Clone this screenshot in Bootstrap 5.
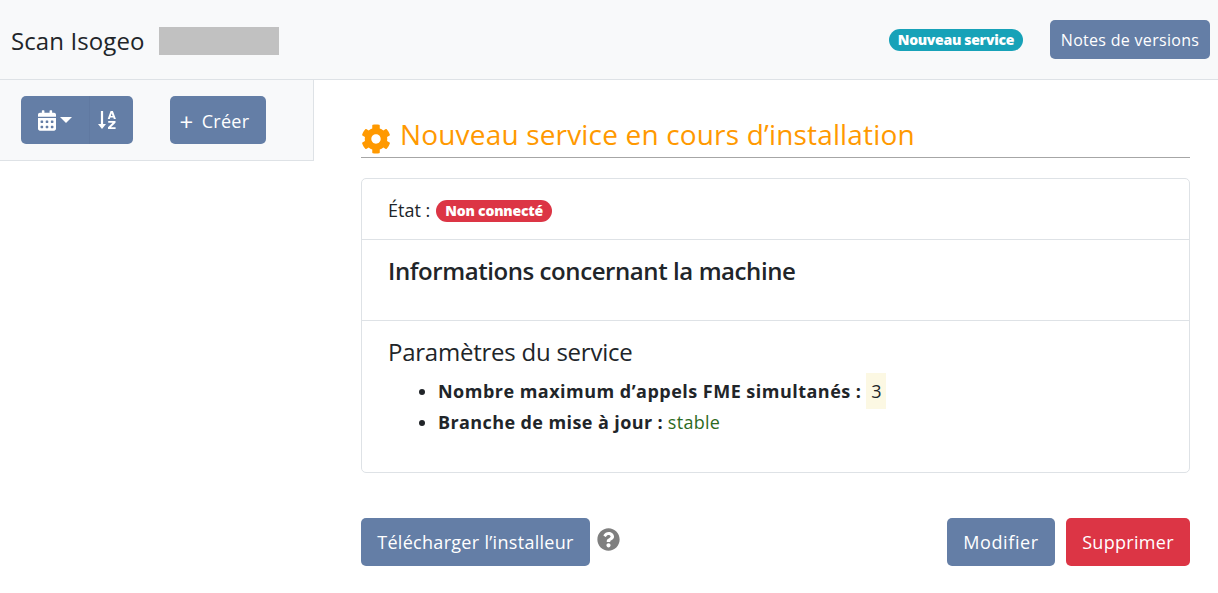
<!DOCTYPE html>
<html lang="fr">
<head>
    <meta charset="UTF-8">
    <meta name="viewport" content="width=device-width, initial-scale=1.0">
    <title>Scan Isogeo</title>
    <link href="https://cdn.jsdelivr.net/npm/bootstrap@5.3.3/dist/css/bootstrap.min.css" rel="stylesheet">
    <style>
        body {
            font-family: "Open Sans", "Noto Sans", sans-serif;
            color: #212529;
        }
        .top-bar {
            height: 80px;
            background-color: #f8f9fa;
            border-bottom: 1px solid #dee2e6;
            padding: 0 8px 0 11px;
        }
        .brand-name { font-size: 24px; margin-top: 2px; letter-spacing: 0.1px; }
        .hidden-block {
            width: 120px;
            height: 28px;
            background-color: #c1c1c1;
            margin: 2px 0 0 14px;
        }
        .btn-iso {
            background-color: #647ea6;
            color: #fff;
            border: 0;
            font-size: 18px;
            border-radius: 5px;
        }
        .btn-iso:hover { background-color: #566f96; color: #fff; }
        .btn-notes { width: 160px; height: 39px; padding: 0; margin-left: 27px; font-size: 16px; letter-spacing: 0.3px; }
        .badge-new {
            background-color: #17a2b8;
            font-size: 14px;
            font-weight: 800;
            padding: 4px 9px;
            letter-spacing: -0.3px;
            border-radius: 11px;
        }
        .side-panel { width: 314px; flex: none; }
        .side-tools {
            height: 81px;
            padding: 16px 0 0 21px;
            background-color: #f8f9fa;
            border-right: 1px solid #dee2e6;
            border-bottom: 1px solid #dee2e6;
        }
        .btn-tool { height: 48px; width: 69px; padding: 0 2px 0 0; }
        .btn-tool-right { width: 44px; padding: 0 0 0 7px; border-left: 1px solid #6079a1; }
        .btn-create { width: 96px; height: 48px; padding: 2px 7px 0 0; margin-left: 37px; letter-spacing: 0.3px; }
        .btn-create .plus-sign { font-size: 24px; line-height: 1; margin-right: 8px; vertical-align: -3px; }
        .content-pane { padding: 0 28px 0 47px; }
        .page-title {
            color: #ff9900;
            font-size: 28px;
            font-weight: 400;
            height: 78px;
            margin: 0;
            padding-top: 34px;
            border-bottom: 1px solid #a6a6a6;
            line-height: 40px;
            letter-spacing: 0.17px;
        }
        .page-title svg { margin-right: 9px; vertical-align: -9px; }
        .info-card { margin-top: 20px; border-color: #dee2e6; height: 295px; border-radius: 5px; }
        .state-row { height: 61px; padding: 3px 26px 0; font-size: 18px; border-bottom: 1px solid #dee2e6; }
        .badge-off {
            background-color: #dc3545;
            font-size: 14px;
            font-weight: 800;
            padding: 4px 9px;
            letter-spacing: -0.2px;
            border-radius: 11px;
            margin-left: 6px;
        }
        .machine-row { height: 81px; padding: 16px 26px 0; border-bottom: 1px solid #dee2e6; }
        .machine-row h5, .params-row h5 { font-size: 24px; margin: 0; line-height: 30px; }
        .machine-row h5 { font-weight: 600; letter-spacing: -0.42px; }
        .params-row h5 { font-weight: 400; letter-spacing: -0.24px; }
        .params-row { padding: 16px 26px 0; font-size: 18px; }
        .params-row ul { margin: 9px 0 0; padding-left: 50px; line-height: 31px; }
        .params-row b { font-weight: 700; letter-spacing: 0.48px; }
        .branch-label { letter-spacing: 0.4px !important; }
        .value-max { background-color: #fcf8e3; padding: 6px 5px; }
        .value-branch { color: #2d6a1e; letter-spacing: 0.3px; }
        .action-row { margin-top: 45px; }
        .action-btn { height: 48px; font-size: 18px; padding: 0; letter-spacing: 0.3px; }
        .btn-download { width: 229px; }
        .btn-edit { width: 108px; letter-spacing: 0.6px; }
        .help-icon { margin-left: 7px; margin-bottom: 6px; }
        .btn-delete { background-color: #dc3545; margin-left: 11px; width: 124px; }
        .btn-delete:hover { background-color: #c82333; }
    </style>
</head>
<body>

    <nav class="top-bar d-flex align-items-center">
        <span class="brand-name">Scan Isogeo</span>
        <span class="hidden-block"></span>
        <span class="badge rounded-pill badge-new ms-auto">Nouveau service</span>
        <button type="button" class="btn btn-iso btn-notes">Notes de versions</button>
    </nav>

    <div class="d-flex">
        <aside class="side-panel">
            <div class="side-tools d-flex align-items-start">
                <div class="btn-group">
                    <button type="button" class="btn btn-iso btn-tool d-flex align-items-center justify-content-center gap-1">
                        <svg width="18" height="21" viewBox="0 0 448 512" fill="#fff"><path d="M0 464c0 26.500 21.500 48 48 48h352c26.500 0 48-21.500 48-48V192H0v272zm320-196c0-6.600 5.400-12 12-12h40c6.600 0 12 5.400 12 12v40c0 6.600-5.400 12-12 12h-40c-6.600 0-12-5.400-12-12v-40zm0 128c0-6.600 5.400-12 12-12h40c6.600 0 12 5.400 12 12v40c0 6.600-5.400 12-12 12h-40c-6.600 0-12-5.400-12-12v-40zM192 268c0-6.600 5.400-12 12-12h40c6.600 0 12 5.400 12 12v40c0 6.600-5.400 12-12 12h-40c-6.600 0-12-5.400-12-12v-40zm0 128c0-6.600 5.400-12 12-12h40c6.600 0 12 5.400 12 12v40c0 6.600-5.400 12-12 12h-40c-6.600 0-12-5.400-12-12v-40zM64 268c0-6.600 5.400-12 12-12h40c6.600 0 12 5.400 12 12v40c0 6.600-5.400 12-12 12H76c-6.600 0-12-5.400-12-12v-40zm0 128c0-6.600 5.400-12 12-12h40c6.600 0 12 5.400 12 12v40c0 6.600-5.400 12-12 12H76c-6.600 0-12-5.400-12-12v-40zM400 64h-48V16c0-8.800-7.200-16-16-16h-32c-8.800 0-16 7.200-16 16v48H160V16c0-8.800-7.200-16-16-16h-32c-8.800 0-16 7.200-16 16v48H48C21.500 64 0 85.500 0 112v48h448v-48c0-26.500-21.500-48-48-48z"/></svg>
                        <svg width="12" height="6" viewBox="0 0 12 6" fill="#fff"><path d="M0 0h12L6 6z"/></svg>
                    </button>
                    <button type="button" class="btn btn-iso btn-tool btn-tool-right d-flex align-items-center">
                        <svg width="20" height="20" viewBox="0 0 20 20" fill="#fff">
                            <path d="M3.900 1h2.200v13h2.900L5 19 1 14h2.900z"/>
                            <path d="M13.600 1h2.300l3 8h-2.100l-.5-1.500h-3l-.5 1.500h-2.100zm1.100 2.300-.9 2.800h1.800zM11.200 11h7.300v1.700l-4.600 4.500h4.700V19h-7.600v-1.700l4.600-4.500h-4.400z"/>
                        </svg>
                    </button>
                </div>
                <button type="button" class="btn btn-iso btn-create"><span class="plus-sign">+</span>Créer</button>
            </div>
        </aside>

        <main class="content-pane flex-grow-1">
            <h1 class="page-title">
                <svg width="30" height="30" viewBox="0 0 512 512" fill="#ff9900"><path d="M487.400 315.700l-42.600-24.600c4.300-23.200 4.300-47 0-70.200l42.600-24.600c4.900-2.800 7.100-8.600 5.500-14-11.100-35.600-30-67.800-54.700-94.600-3.800-4.100-10-5.100-14.800-2.300L380.800 110c-17.900-15.400-38.500-27.300-60.800-35.100V25.800c0-5.600-3.900-10.500-9.400-11.700-36.700-8.200-74.300-7.800-109.200 0-5.500 1.200-9.400 6.100-9.400 11.700V75c-22.200 7.900-42.800 19.800-60.800 35.100L88.700 85.500c-4.900-2.800-11-1.900-14.800 2.300-24.700 26.700-43.600 58.900-54.700 94.600-1.700 5.400.6 11.200 5.500 14L67.300 221c-4.300 23.200-4.300 47 0 70.200l-42.600 24.600c-4.900 2.800-7.100 8.600-5.500 14 11.100 35.600 30 67.800 54.700 94.600 3.800 4.100 10 5.100 14.800 2.300l42.600-24.600c17.900 15.400 38.500 27.300 60.800 35.100v49.200c0 5.600 3.900 10.500 9.400 11.700 36.700 8.200 74.300 7.800 109.200 0 5.500-1.200 9.400-6.100 9.400-11.700v-49.200c22.200-7.900 42.800-19.800 60.800-35.100l42.600 24.600c4.900 2.800 11 1.900 14.800-2.300 24.700-26.700 43.600-58.900 54.700-94.600 1.500-5.500-.7-11.300-5.600-14.100zM256 336c-44.100 0-80-35.900-80-80s35.900-80 80-80 80 35.900 80 80-35.900 80-80 80z"/></svg>Nouveau service en cours d’installation
            </h1>

            <div class="card info-card">
                <div class="state-row d-flex align-items-center">
                    <span>État :</span>
                    <span class="badge rounded-pill badge-off">Non connecté</span>
                </div>
                <div class="machine-row">
                    <h5>Informations concernant la machine</h5>
                </div>
                <div class="params-row">
                    <h5>Paramètres du service</h5>
                    <ul>
                        <li><b>Nombre maximum d’appels FME simultanés :</b> <span class="value-max">3</span></li>
                        <li><b class="branch-label">Branche de mise à jour :</b> <span class="value-branch">stable</span></li>
                    </ul>
                </div>
            </div>

            <div class="action-row d-flex align-items-center">
                <button type="button" class="btn btn-iso action-btn btn-download">Télécharger l’installeur</button>
                <svg class="help-icon" width="23" height="23" viewBox="0 0 512 512" fill="#7f7f7f"><path d="M504 256c0 137-111 248-248 248S8 393 8 256C8 119.100 119 8 256 8s248 111.100 248 248zM262.700 90c-54.500 0-89.300 23-116.500 63.800-3.500 5.300-2.400 12.400 2.700 16.300l34.700 26.300c5.200 3.900 12.600 3 16.700-2.100 17.900-22.700 30.100-35.800 57.300-35.800 20.400 0 45.700 13.100 45.700 33 0 15-12.400 22.700-32.600 34-23.600 13.200-54.800 29.700-54.800 70.900V300c0 6.600 5.400 12 12 12h56c6.600 0 12-5.400 12-12v-1.300c0-28.600 83.500-29.800 83.500-107.200 0-58.300-60.500-102.500-117.200-102.500zM256 339.200c-25.500 0-46.200 20.700-46.200 46.200 0 25.500 20.700 46.200 46.200 46.200s46.200-20.700 46.200-46.200c0-25.500-20.700-46.200-46.200-46.200z"/></svg>
                <button type="button" class="btn btn-iso action-btn btn-edit ms-auto">Modifier</button>
                <button type="button" class="btn btn-iso action-btn btn-delete">Supprimer</button>
            </div>
        </main>
    </div>

    <script src="https://cdn.jsdelivr.net/npm/bootstrap@5.3.3/dist/js/bootstrap.bundle.min.js"></script>
</body>
</html>
